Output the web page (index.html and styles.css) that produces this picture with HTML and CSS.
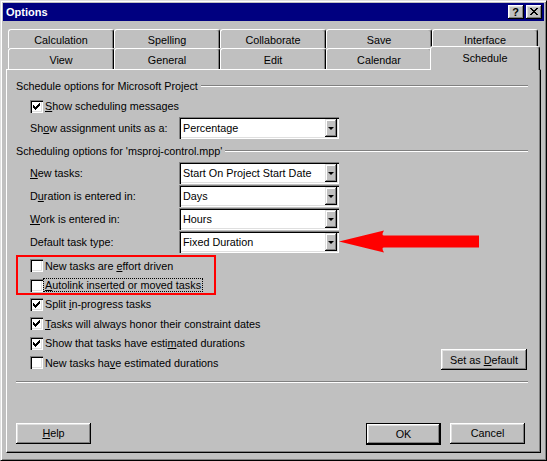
FILE: index.html
```html
<!DOCTYPE html>
<html lang="en">
<head>
<meta charset="utf-8">
<title>Options</title>
<link rel="stylesheet" href="styles.css">
</head>
<body>
<div class="window">
  <div class="titlebar">
    <span class="title">Options</span>
    <div class="caption-btns">
      <span class="cbtn cbtn-help">?</span>
      <span class="cbtn cbtn-close">
        <svg width="8" height="7" viewBox="0 0 8 7" shape-rendering="crispEdges"><path d="M0 0h2v1H0zM6 0h2v1H6zM1 1h2v1H1zM5 1h2v1H5zM2 2h4v1H2zM3 3h2v1H3zM2 4h4v1H2zM1 5h2v1H1zM5 5h2v1H5zM0 6h2v1H0zM6 6h2v1H6z"/></svg>
      </span>
    </div>
  </div>

  <div class="tabs">
    <div class="tabrow tabrow-back">
      <div class="tab">Calculation</div>
      <div class="tab">Spelling</div>
      <div class="tab">Collaborate</div>
      <div class="tab">Save</div>
      <div class="tab">Interface</div>
    </div>
    <div class="tabrow tabrow-front">
      <div class="tab">View</div>
      <div class="tab">General</div>
      <div class="tab">Edit</div>
      <div class="tab">Calendar</div>
      <div class="tab tab-active">Schedule</div>
    </div>
  </div>

  <div class="panel">
    <div class="legend"><span>Schedule options for Microsoft Project</span><i class="rule"></i></div>
    <div class="check">
      <span class="box"><svg width="13" height="13" viewBox="0 0 13 13" shape-rendering="crispEdges"><path d="M3 5h1v3H3zM4 6h1v3H4zM5 7h1v3H5zM6 6h1v3H6zM7 5h1v3H7zM8 4h1v3H8zM9 3h1v3H9z"/></svg></span>
      <span><u>S</u>how scheduling messages</span>
    </div>
    <div class="field field-first">
      <span class="field-label">Sh<u>o</u>w assignment units as a:</span>
      <div class="combo"><span class="combo-value">Percentage</span><span class="combo-btn"><i class="caret"></i></span></div>
    </div>

    <div class="legend legend-second"><span>Scheduling options for 'msproj-control.mpp'</span><i class="rule"></i></div>
    <div class="field field-top">
      <span class="field-label"><u>N</u>ew tasks:</span>
      <div class="combo"><span class="combo-value">Start On Project Start Date</span><span class="combo-btn"><i class="caret"></i></span></div>
    </div>
    <div class="field">
      <span class="field-label">D<u>u</u>ration is entered in:</span>
      <div class="combo"><span class="combo-value">Days</span><span class="combo-btn"><i class="caret"></i></span></div>
    </div>
    <div class="field">
      <span class="field-label"><u>W</u>ork is entered in:</span>
      <div class="combo"><span class="combo-value">Hours</span><span class="combo-btn"><i class="caret"></i></span></div>
    </div>
    <div class="field">
      <span class="field-label">Default task type:</span>
      <div class="combo"><span class="combo-value">Fixed Duration</span><span class="combo-btn"><i class="caret"></i></span></div>
    </div>

    <div class="options">
      <div class="option-list">
        <div class="option"><span class="box"></span><span class="option-text">New tasks are <u>e</u>ffort driven</span></div>
        <div class="option"><span class="box"></span><span class="option-text focus"><u>A</u>utolink inserted or moved tasks</span></div>
        <div class="option"><span class="box"><svg width="13" height="13" viewBox="0 0 13 13" shape-rendering="crispEdges"><path d="M3 5h1v3H3zM4 6h1v3H4zM5 7h1v3H5zM6 6h1v3H6zM7 5h1v3H7zM8 4h1v3H8zM9 3h1v3H9z"/></svg></span><span class="option-text">Split <u>i</u>n-progress tasks</span></div>
        <div class="option"><span class="box"><svg width="13" height="13" viewBox="0 0 13 13" shape-rendering="crispEdges"><path d="M3 5h1v3H3zM4 6h1v3H4zM5 7h1v3H5zM6 6h1v3H6zM7 5h1v3H7zM8 4h1v3H8zM9 3h1v3H9z"/></svg></span><span class="option-text"><u>T</u>asks will always honor their constraint dates</span></div>
        <div class="option"><span class="box"><svg width="13" height="13" viewBox="0 0 13 13" shape-rendering="crispEdges"><path d="M3 5h1v3H3zM4 6h1v3H4zM5 7h1v3H5zM6 6h1v3H6zM7 5h1v3H7zM8 4h1v3H8zM9 3h1v3H9z"/></svg></span><span class="option-text">Show that tasks have esti<u>m</u>ated durations</span></div>
        <div class="option"><span class="box"></span><span class="option-text">New tasks ha<u>v</u>e estimated durations</span></div>
      </div>
      <div class="btn btn-wide"><span>Set as <u>D</u>efault</span></div>
    </div>

    <div class="separator"></div>

    <div class="actions">
      <div class="btn"><span><u>H</u>elp</span></div>
      <div class="btn btn-default"><span>OK</span></div>
      <div class="btn btn-cancel"><span>Cancel</span></div>
    </div>

    <div class="callout-box"></div>
    <svg class="callout-arrow" width="142" height="23" viewBox="0 0 142 23">
      <path d="M0 11.5L45 0.5Q42 5.5 45 5.5H140V17.5H45Q42 17.5 45 22.5Z" fill="#ff0000"/>
    </svg>
  </div>
</div>
</body>
</html>
```

FILE: styles.css
```css
body {
  margin: 0;
  background: #c0c0c0;
}

.window {
  width: 547px;
  height: 461px;
  box-sizing: border-box;
  display: flex;
  flex-direction: column;
  padding: 2px;
  background: #c0c0c0;
  border: 1px solid;
  border-color: #dfdfdf #000 #000 #dfdfdf;
  box-shadow: inset 1px 1px #fff, inset -1px -1px #808080;
  font: 10.8px "Liberation Sans", Arial, sans-serif;
  color: #000;
}

u {
  text-decoration: underline;
  text-underline-offset: 1px;
}

/* caption bar */
.titlebar {
  height: 18px;
  flex: none;
  display: flex;
  align-items: center;
  justify-content: space-between;
  padding: 0 2px 0 3px;
  background: #000080;
  color: #fff;
  font-size: 11px;
  font-weight: bold;
}

.caption-btns {
  display: flex;
  gap: 2px;
}

.cbtn {
  width: 16px;
  height: 14px;
  box-sizing: border-box;
  display: flex;
  align-items: center;
  justify-content: center;
  background: #c0c0c0;
  color: #000;
  font-size: 11px;
  font-weight: bold;
  box-shadow: inset -1px -1px #000, inset 1px 1px #fff, inset -2px -2px #808080, inset 2px 2px #dfdfdf;
}

.cbtn-help {
  padding-right: 1px;
  line-height: 14px;
}

.cbtn-close svg {
  display: block;
  margin: 0 1px 1px 0;
}

/* tab strip */
.tabs {
  flex: none;
  margin: 8px 0 0 5px;
  display: flex;
  flex-direction: column;
}

.tabrow {
  display: flex;
}

.tab {
  width: 106px;
  height: 19px;
  box-sizing: border-box;
  flex: none;
  display: flex;
  align-items: center;
  justify-content: center;
  padding-top: 1px;
  border: 1px solid #fff;
  border-bottom: none;
  border-right-color: #000;
  border-radius: 3px 3px 0 0;
  box-shadow: inset -1px 0 #808080;
  background: #c0c0c0;
}

.tabrow-front .tab {
  height: 21px;
}

.tabrow-front .tab.tab-active {
  position: relative;
  z-index: 1;
  width: 110px;
  height: 24px;
  margin: -2px -2px -1px -2px;
  padding-bottom: 2px;
}

/* page of the tab control */
.panel {
  position: relative;
  flex: 1;
  display: flex;
  flex-direction: column;
  margin: 0 3px 5px 3px;
  padding: 0 12px 0 9px;
  border: 1px solid;
  border-color: #fff #000 #000 #fff;
  box-shadow: inset -1px -1px #808080;
}

.legend {
  height: 14px;
  margin-top: 9px;
  display: flex;
  align-items: center;
  white-space: nowrap;
}

.legend-second {
  margin-top: 5px;
}

.rule {
  flex: 1;
  height: 0;
  margin-left: 3px;
  border-top: 1px solid #808080;
  border-bottom: 1px solid #fff;
}

.check {
  height: 20px;
  margin-top: 3px;
  padding-left: 14px;
  display: flex;
  align-items: center;
}

.box {
  width: 13px;
  height: 13px;
  flex: none;
  margin-right: 2px;
  background: #fff;
  box-shadow: inset 1px 1px #808080, inset 2px 2px #000, inset -1px -1px #fff, inset -2px -2px #dfdfdf;
}

.box svg {
  display: block;
}

.field {
  height: 22px;
  margin-top: 1px;
  padding-left: 14px;
  display: flex;
  align-items: center;
}

.field-top {
  margin-top: 4px;
}

.field-label {
  width: 149px;
  flex: none;
}

.combo {
  width: 160px;
  height: 22px;
  box-sizing: border-box;
  padding: 2px;
  display: flex;
  align-items: stretch;
  background: #fff;
  box-shadow: inset 1px 1px #808080, inset 2px 2px #000, inset -1px -1px #fff, inset -2px -2px #dfdfdf;
}

.combo-value {
  flex: 1;
  display: flex;
  align-items: center;
  padding-left: 2px;
  white-space: nowrap;
}

.combo-btn {
  width: 12px;
  flex: none;
  display: flex;
  align-items: center;
  justify-content: center;
  background: #c0c0c0;
  box-shadow: inset -1px -1px #000, inset 1px 1px #dfdfdf, inset -2px -2px #808080, inset 2px 2px #fff;
}

.caret {
  width: 0;
  height: 0;
  border-left: 3px solid transparent;
  border-right: 3px solid transparent;
  border-top: 3px solid #000;
  margin-top: 1px;
}

.options {
  margin-top: 3px;
  display: flex;
  justify-content: space-between;
}

.option-list {
  display: flex;
  flex-direction: column;
}

.option {
  height: 19.4px;
  padding-left: 14px;
  display: flex;
  align-items: center;
  white-space: nowrap;
}

.focus {
  margin-left: -1px;
  padding: 0 1px;
  line-height: 12px;
  outline: 1px dotted #000;
}

.btn {
  width: 75px;
  height: 21px;
  box-sizing: border-box;
  flex: none;
  display: flex;
  align-items: center;
  justify-content: center;
  white-space: nowrap;
  background: #c0c0c0;
  box-shadow: inset -1px -1px #000, inset 1px 1px #fff, inset -2px -2px #808080, inset 2px 2px #dfdfdf;
}

.btn-wide {
  width: 86px;
  align-self: flex-end;
  margin: 0 1px 2px 0;
}

.separator {
  height: 0;
  margin-top: 8.6px;
  border-top: 1px solid #808080;
  border-bottom: 1px solid #fff;
}

.actions {
  margin-top: 40px;
  display: flex;
  align-items: flex-start;
  gap: 9px;
}

.btn-default {
  margin-left: auto;
  height: 22px;
  border: 1px solid #000;
}

.btn-cancel {
  margin-right: 3px;
}

/* red annotation drawn over the page */
.callout-box {
  position: absolute;
  left: 9px;
  top: 185px;
  width: 200px;
  height: 40px;
  box-sizing: border-box;
  border: 2px solid #ff0000;
}

.callout-arrow {
  position: absolute;
  left: 332px;
  top: 160px;
}
```
